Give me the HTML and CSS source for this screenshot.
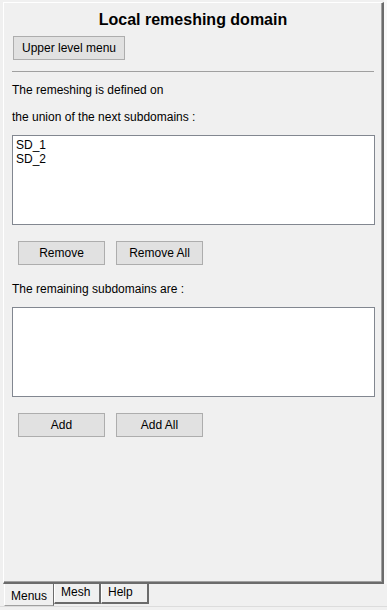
FILE: index.html
```html
<!DOCTYPE html>
<html lang="en">
<head>
  <meta charset="UTF-8" />
  <title>Local remeshing domain</title>
  <link rel="stylesheet" href="styles.css">
</head>
<body>
  <div class="frame">
    <div class="panel">
      <h2 class="title">Local remeshing domain</h2>
      <button class="btn btn-upper">Upper level menu</button>
      <div class="sep"></div>

      <p class="label first">The remeshing is defined on</p>
      <p class="label second">the union of the next subdomains :</p>
      <div class="listbox">
        <div class="item">SD_1</div>
        <div class="item">SD_2</div>
      </div>
      <div class="btn-row">
        <button class="btn">Remove</button>
        <button class="btn">Remove All</button>
      </div>

      <p class="label third">The remaining subdomains are :</p>
      <div class="listbox"></div>
      <div class="btn-row">
        <button class="btn">Add</button>
        <button class="btn">Add All</button>
      </div>
    </div>
    <div class="edge"></div>
  </div>

  <!-- bottom notebook tabs -->
  <div class="tabs">
    <div class="tab active">Menus</div>
    <div class="tab mesh">Mesh</div>
    <div class="tab help">Help</div>
  </div>
  <div class="baseline"></div>
</body>
</html>
```

FILE: styles.css
```css
body {
  margin: 0;
  width: 387px;
  height: 610px;
  overflow: hidden;
  background-color: #f0f0f0;
  font-family: "Liberation Sans", Arial, sans-serif;
  font-size: 12px;
  color: #000;
}
.frame {
  display: flex;
  height: 582px;
  margin-top: 2px;
  padding-left: 3px;
}
.panel {
  box-sizing: border-box;
  width: 381px;
  height: 582px;
  padding-left: 8px;
  border-top: 1px solid #fff;
  border-left: 1px solid #fff;
  border-right: 2px solid #6b6b6b;
  border-bottom: 2px solid #6b6b6b;
  box-shadow: inset -1px -1px 0 #a0a0a0;
}
.edge {
  flex: 1;
  background-color: #f8f8f8;
  margin-top: -2px;
}
.title {
  margin: 7px 0 0 -8px;
  font-size: 16px;
  line-height: 20px;
  font-weight: bold;
  text-align: center;
}
.btn {
  display: block;
  box-sizing: border-box;
  height: 24px;
  padding: 0;
  background-color: #e1e1e1;
  border: 1px solid #adadad;
  border-radius: 0;
  font-family: inherit;
  font-size: 12px;
  color: #000;
}
.btn-upper {
  width: 112px;
  margin: 6px 0 0 1px;
}
.sep {
  width: 362px;
  margin-top: 11px;
  border-top: 1px solid #a0a0a0;
}
.label {
  margin: 0;
  line-height: 14px;
}
.label.first { margin-top: 11px; }
.label.second { margin-top: 13px; }
.label.third { margin-top: 17px; }
.listbox {
  box-sizing: border-box;
  width: 363px;
  height: 90px;
  margin-top: 11px;
  padding: 2px 3px;
  background-color: #fff;
  border: 1px solid #828790;
}
.item {
  line-height: 14px;
}
.btn-row {
  display: flex;
  gap: 11px;
  margin: 16px 0 0 6px;
}
.btn-row .btn {
  width: 87px;
}
.tabs {
  display: flex;
  height: 22px;
  padding-left: 4px;
}
.tab {
  box-sizing: border-box;
  padding-left: 6px;
  line-height: 14px;
  border-left: 1px solid #fff;
  border-right: 1px solid #6b6b6b;
}
.tab.active {
  width: 50px;
  height: 22px;
  padding-top: 5px;
  border-bottom: 1px solid #a0a0a0;
}
.tab.mesh,
.tab.help {
  height: 20px;
  padding-top: 1px;
  border-right-width: 2px;
  border-bottom: 2px solid #6b6b6b;
}
.tab.mesh { width: 47px; }
.tab.help { width: 48px; }
.baseline {
  height: 1px;
  background-color: #dcdcdc;
}
```
